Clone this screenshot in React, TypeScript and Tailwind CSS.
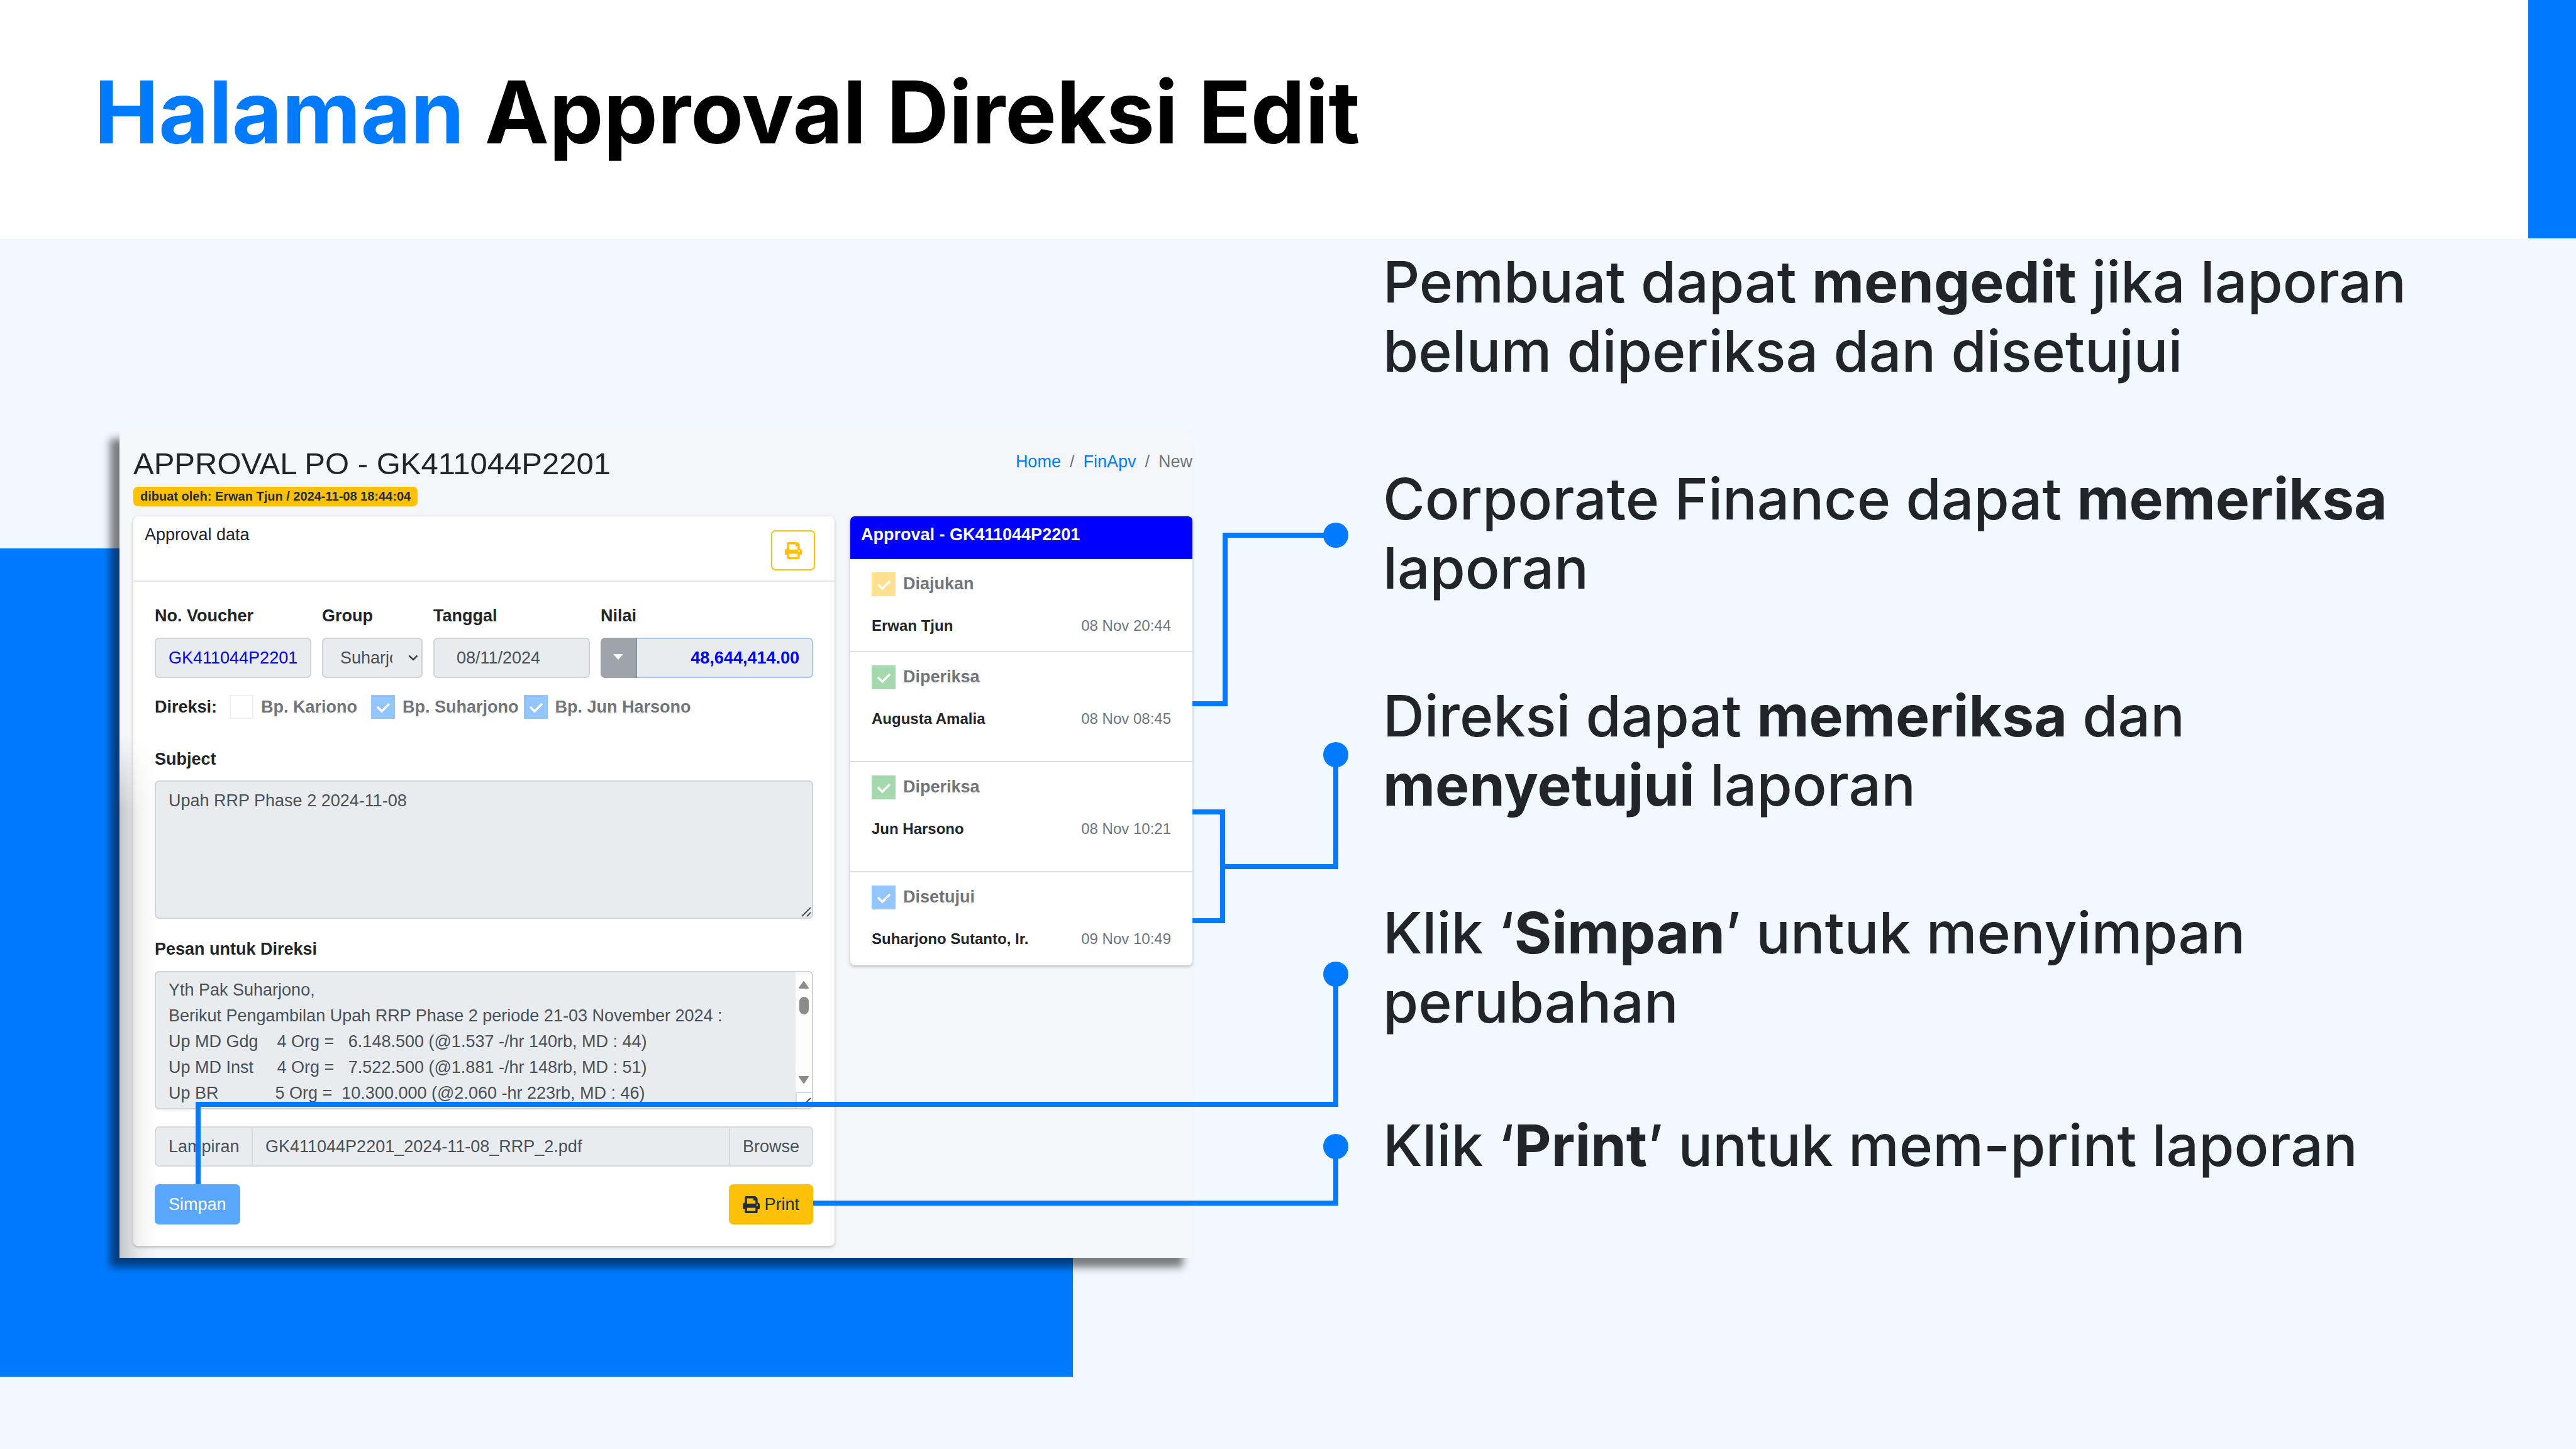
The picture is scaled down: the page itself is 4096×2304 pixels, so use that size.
import { FaPrint } from "react-icons/fa";

const messageText = [
  "Yth Pak Suharjono,",
  "Berikut Pengambilan Upah RRP Phase 2 periode 21-03 November 2024 :",
  "Up MD Gdg    4 Org =   6.148.500 (@1.537 -/hr 140rb, MD : 44)",
  "Up MD Inst     4 Org =   7.522.500 (@1.881 -/hr 148rb, MD : 51)",
  "Up BR            5 Org =  10.300.000 (@2.060 -hr 223rb, MD : 46)",
].join("\n");

const tones = {
  yellow: "bg-[#ffe08f]",
  green: "bg-[#a4d9ae]",
  blue: "bg-[#93c6ff]",
  none: "border-2 border-[#f3f1f0] bg-white",
};

type Tone = keyof typeof tones;

function Check({ id, label, tone }: { id: string; label: string; tone: Tone }) {
  return (
    <span className="flex items-center gap-3">
      <span className="grid size-[38px] shrink-0">
        <input
          id={id}
          type="checkbox"
          defaultChecked={tone !== "none"}
          className={`col-start-1 row-start-1 size-full appearance-none ${tones[tone]}`}
        />
        {tone !== "none" && (
          <svg viewBox="0 0 38 38" className="pointer-events-none col-start-1 row-start-1 size-full">
            <path d="M10 19 L17 26 L29 14" fill="none" stroke="#fff" strokeWidth="3.5" />
          </svg>
        )}
      </span>
      <label htmlFor={id} className="font-bold whitespace-nowrap text-[#717579]">
        {label}
      </label>
    </span>
  );
}

function Grip() {
  return (
    <svg viewBox="0 0 20 20" className="size-5">
      <path d="M4 18 L18 4 M12 18 L18 12" stroke="#4a4d50" strokeWidth="2" fill="none" />
    </svg>
  );
}

const fieldBox = "h-16 rounded-[7px] border-2 border-[#ced4da] bg-[#e9ecef] text-[#495057]";

function ApprovalForm() {
  return (
    <section className="min-w-0 rounded-[7px] bg-white shadow-[0_2px_5px_rgba(0,0,0,0.25)]">
      <div className="flex h-[104px] items-start justify-between border-b-2 border-[#e6e7e8] pr-[31px] pl-[18px]">
        <h2 className="pt-[9px]">Approval data</h2>
        <button
          aria-label="Print"
          className="mt-[22px] flex h-16 w-[70px] items-center justify-center rounded-[7px] border-2 border-[#ffc107] text-[#ffc107]"
        >
          <FaPrint />
        </button>
      </div>

      <form className="px-[34px] py-[34px]">
        <div className="grid grid-cols-[249fr_160fr_249fr_338fr] gap-[17px]">
          <div className="flex min-w-0 flex-col gap-[14px]">
            <label htmlFor="voucher" className="font-bold">No. Voucher</label>
            <input id="voucher" readOnly defaultValue="GK411044P2201" className={`w-full px-5 ${fieldBox} text-[#0000ff]!`} />
          </div>
          <div className="flex min-w-0 flex-col gap-[14px]">
            <label htmlFor="group" className="font-bold">Group</label>
            <div className="grid">
              <select id="group" className={`col-start-1 row-start-1 w-full appearance-none overflow-hidden pr-[46px] pl-[27px] text-clip ${fieldBox}`}>
                <option>Suharjono</option>
              </select>
              <svg viewBox="0 0 16 10" className="pointer-events-none col-start-1 row-start-1 mr-[7px] h-[10px] w-4 self-center justify-self-end">
                <path d="M1.5 1.5 L8 8 L14.5 1.5" fill="none" stroke="#3c4146" strokeWidth="2.5" />
              </svg>
            </div>
          </div>
          <div className="flex min-w-0 flex-col gap-[14px]">
            <label htmlFor="date" className="font-bold">Tanggal</label>
            <input id="date" readOnly defaultValue="08/11/2024" className={`w-full px-[35px] ${fieldBox}`} />
          </div>
          <div className="flex min-w-0 flex-col gap-[14px]">
            <label htmlFor="amount" className="font-bold">Nilai</label>
            <div className="flex">
              <button type="button" aria-label="Pilih nilai" className="flex h-16 w-[58px] shrink-0 items-center justify-center rounded-l-[7px] border-r-2 border-[#8694a3] bg-[#9fa3aa]">
                <svg viewBox="0 0 16 9" className="mb-1 h-[9px] w-4"><path d="M0 0 H16 L8 9 Z" fill="#fff" /></svg>
              </button>
              <input
                id="amount"
                readOnly
                defaultValue="48,644,414.00"
                className="h-16 w-full min-w-0 rounded-r-[7px] border-2 border-l-0 border-[#a3cbf5] bg-[#e9ecef] px-5 text-right font-bold text-[#0000ff]"
              />
            </div>
          </div>
        </div>

        <fieldset className="mt-[26px] flex h-[40px] items-center">
          <span className="mr-[20px] font-bold">Direksi:</span>
          <Check id="kariono" label="Bp. Kariono" tone="none" />
          <span className="w-[22px]" />
          <Check id="suharjono" label="Bp. Suharjono" tone="blue" />
          <span className="w-2" />
          <Check id="harsono" label="Bp. Jun Harsono" tone="blue" />
        </fieldset>

        <div className="mt-[43px] flex flex-col gap-[13px]">
          <label htmlFor="subject" className="font-bold">Subject</label>
          <div className="grid">
            <textarea
              id="subject"
              readOnly
              defaultValue="Upah RRP Phase 2 2024-11-08"
              className="col-start-1 row-start-1 h-[220px] resize-none rounded-[7px] border-2 border-[#ced4da] bg-[#e9ecef] px-5 py-[10px] text-[#495057]"
            />
            <span className="pointer-events-none col-start-1 row-start-1 self-end justify-self-end p-[2px]"><Grip /></span>
          </div>
        </div>

        <div className="mt-[28px] flex flex-col gap-[14px]">
          <label htmlFor="message" className="font-bold">Pesan untuk Direksi</label>
          <div className="flex h-[220px] overflow-hidden rounded-[7px] border-2 border-[#ced4da] bg-[#e9ecef]">
            <textarea
              id="message"
              readOnly
              defaultValue={messageText}
              className="h-full min-w-0 flex-1 resize-none overflow-hidden bg-transparent px-5 pt-[8px] whitespace-pre text-[#495057]"
            />
            <div className="flex w-[26px] flex-col items-center bg-[#fcfcfc]">
              <svg viewBox="0 0 16 12" className="mt-[14px] h-3 w-4"><path d="M8 1 L15 11 H1 Z" fill="#8b8b8b" stroke="#8b8b8b" strokeWidth="2" strokeLinejoin="round" /></svg>
              <span className="mt-[13px] h-7 w-[15px] rounded-full bg-[#8b8b8b]" />
              <svg viewBox="0 0 16 12" className="mt-auto h-3 w-4"><path d="M8 11 L15 1 H1 Z" fill="#8b8b8b" stroke="#8b8b8b" strokeWidth="2" strokeLinejoin="round" /></svg>
              <span className="mt-[13px] flex h-[26px] w-full items-end justify-end border-t-2 border-l-2 border-[#d5d8dc] bg-white"><Grip /></span>
            </div>
          </div>
        </div>

        <div className="mt-[27px] flex h-16 items-stretch overflow-hidden rounded-[7px] border-2 border-[#d6dade] bg-[#e9ecef] text-[#495057]">
          <label htmlFor="file" className="flex w-[154px] items-center border-r-2 border-[#d6dade] pl-5">Lampiran</label>
          <input id="file" readOnly defaultValue="GK411044P2201_2024-11-08_RRP_2.pdf" className="min-w-0 flex-1 bg-transparent px-5" />
          <button type="button" className="border-l-2 border-[#d6dade] px-5">Browse</button>
        </div>

        <div className="mt-[28px] flex items-center justify-between">
          <button type="button" className="h-16 rounded-[7px] bg-[#59a7ff] px-[22px] text-white">Simpan</button>
          <button type="button" className="flex h-16 items-center gap-[7px] rounded-[7px] bg-[#ffc107] px-[22px] text-[#1f2d3d]">
            <FaPrint />
            Print
          </button>
        </div>
      </form>
    </section>
  );
}

const steps: { id: string; label: string; tone: Tone; name: string; time: string; tall: boolean }[] = [
  { id: "s1", label: "Diajukan", tone: "yellow", name: "Erwan Tjun", time: "08 Nov 20:44", tall: false },
  { id: "s2", label: "Diperiksa", tone: "green", name: "Augusta Amalia", time: "08 Nov 08:45", tall: true },
  { id: "s3", label: "Diperiksa", tone: "green", name: "Jun Harsono", time: "08 Nov 10:21", tall: true },
  { id: "s4", label: "Disetujui", tone: "blue", name: "Suharjono Sutanto, Ir.", time: "09 Nov 10:49", tall: false },
];

function ApprovalSteps() {
  return (
    <section className="min-w-0 self-start overflow-hidden rounded-[7px] bg-white shadow-[0_2px_5px_rgba(0,0,0,0.25)]">
      <h2 className="h-[68px] bg-[#0000ff] px-[17px] pt-[9px] font-bold text-white">Approval - GK411044P2201</h2>
      <ul>
        {steps.map((s) => (
          <li
            key={s.id}
            className={`border-[#dfdfdf] px-[34px] pt-[19px] not-last:border-b-2 ${s.tall ? "h-[175px]" : "h-[148px]"}`}
          >
            <Check id={s.id} label={s.label} tone={s.tone} />
            <div className="mt-[28px] flex justify-between text-[24px] leading-[36px]">
              <b>{s.name}</b>
              <time className="text-[#6c757d]">{s.time}</time>
            </div>
          </li>
        ))}
      </ul>
    </section>
  );
}

function AppWindow() {
  return (
    <div className="relative bg-[#f4f6f9] pb-[19px] pl-[22px] font-['Liberation_Sans',Arial,sans-serif] text-[27px] leading-[41px] text-[#212529] shadow-[-15px_15px_12px_rgba(0,0,0,0.5)]">
      <div className="flex h-[138px] items-start justify-between">
        <div className="flex flex-col items-start pt-[22px]">
          <h1 className="text-[49px] leading-[64px]">APPROVAL PO - GK411044P2201</h1>
          <span className="mt-[5px] rounded-[7px] bg-[#ffc107] px-[11px] text-[20px] leading-[31px] font-bold text-[#1f2d3d]">
            dibuat oleh: Erwan Tjun / 2024-11-08 18:44:04
          </span>
        </div>
        <nav className="flex gap-[14px] pt-[31px] text-[#6c757d]">
          <a href="#home" className="text-[#007bff]">Home</a>
          <span>/</span>
          <a href="#finapv" className="text-[#007bff]">FinApv</a>
          <span>/</span>
          <span>New</span>
        </nav>
      </div>
      <div className="grid grid-cols-[1115fr_544fr] gap-[25px]">
        <ApprovalForm />
        <ApprovalSteps />
      </div>
      <div className="pointer-events-none absolute bottom-0 left-0 h-[830px] w-[60px] bg-linear-to-r from-black/20 via-black/5 to-transparent [mask-image:linear-gradient(to_bottom,transparent,black_120px)]" />
    </div>
  );
}

function Connectors() {
  return (
    <svg viewBox="0 0 4096 2304" className="pointer-events-none absolute inset-0 size-full">
      <g fill="none" stroke="#007bff" strokeWidth="8">
        <path d="M1896 1119 H1948 V851 H2124" />
        <path d="M1896 1291 H1944 V1464 H1896 M1944 1378 H2124 V1200" />
        <path d="M315 1883 V1756 H2124 V1549" />
        <path d="M1293 1913 H2124 V1823" />
      </g>
      <g fill="#007bff">
        <circle cx="2124" cy="851" r="20" />
        <circle cx="2124" cy="1200" r="20" />
        <circle cx="2124" cy="1549" r="20" />
        <circle cx="2124" cy="1823" r="20" />
      </g>
    </svg>
  );
}

export default function App() {
  return (
    <div className="relative flex min-h-screen flex-col bg-[#f1f8ff] font-['Inter',sans-serif]">
      <header className="flex h-[379px] items-stretch justify-between bg-white">
        <h1 className="pt-[95px] pl-[150px] text-[137px] leading-[166px] font-bold text-black">
          <span className="text-[#007bff]">Halaman</span> Approval Direksi Edit
        </h1>
        <div className="w-[76px] bg-[#007bff]" />
      </header>

      <main className="relative grid flex-1 grid-cols-[1896fr_2200fr] items-start">
        <div className="absolute top-[493px] left-0 h-[1317px] w-[41.65%] bg-[#007bff]" />
        <div className="mt-[304px] pl-[190px]">
          <AppWindow />
        </div>
        <ul className="relative mt-[14px] pr-[180px] pl-[303px] text-[91px] leading-[110px] font-medium text-[#212529]">
          <li>Pembuat dapat <b>mengedit</b> jika laporan belum diperiksa dan disetujui</li>
          <li className="mt-[125px]">Corporate Finance dapat <b>memeriksa</b> laporan</li>
          <li className="mt-[125px]">Direksi dapat <b>memeriksa</b> dan<br /><b>menyetujui</b> laporan</li>
          <li className="mt-[125px]">Klik ‘<b>Simpan</b>’ untuk menyimpan perubahan</li>
          <li className="mt-[118px]">Klik ‘<b>Print</b>’ untuk mem-print laporan</li>
        </ul>
      </main>

      <Connectors />
    </div>
  );
}
